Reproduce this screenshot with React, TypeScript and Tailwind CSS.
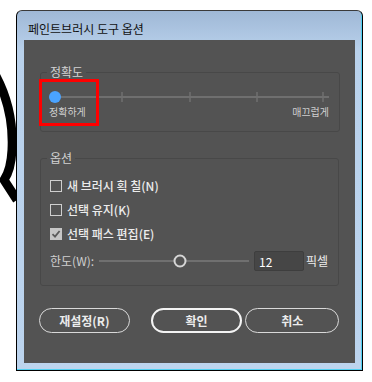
export default function App() {
  return (
    <div className="relative h-[382px] w-[372px] overflow-hidden bg-white pl-[16px] pt-[10px] font-['Noto_Sans_CJK_KR',sans-serif]">
      {/* stroke on the canvas behind the dialog */}
      <svg className="absolute left-0 top-0" width="20" height="220" viewBox="0 0 20 220">
        <path d="M-4 76 Q14 110 12 150 Q11 170 4 180 L17 200" fill="none" stroke="#000" strokeWidth="9" />
      </svg>

      <div className="relative h-[361px] w-[347px] rounded-t-[6px] border border-black border-t-[#3a3a3a] bg-[linear-gradient(#9fb8d6,#b9d1eb_40px,#bcd4ee)] shadow-[inset_-1px_-1px_0_#4fd0f2]">
        {/* Title */}
        <div className="h-[29px] pl-[11px] pt-[10px] text-[12px] leading-[16px] text-[#111]">페인트브러시 도구 옵션</div>

        {/* Body */}
        <div className="relative mx-[7px] h-[323px] bg-[#535353] px-[16px] pt-[24px]">
          <fieldset className="rounded-[3px] border border-[#484848] pb-[12px]">
            <legend className="ml-[6px] px-[3px] text-[12px] leading-[16px] text-[#d2d2d2]">정확도</legend>
            <div className="pl-[8px] pr-[10px] pt-[11px]">
              <svg width="280" height="12" viewBox="0 0 280 12" className="block">
                <line x1="6" y1="6" x2="280" y2="6" stroke="#6f6f6f" strokeWidth="2" />
                {[73, 141, 208, 274].map((x) => (
                  <line key={x} x1={x} y1="1" x2={x} y2="11" stroke="#6f6f6f" strokeWidth="1.5" />
                ))}
                <circle cx="6" cy="6" r="6" fill="#4aa3ff" />
              </svg>
              <div className="mt-[2px] flex justify-between text-[10px] leading-[14px] text-[#cfcfcf]">
                <span>정확하게</span>
                <span>매끄럽게</span>
              </div>
            </div>
          </fieldset>

          <fieldset className="mt-[18px] rounded-[3px] border border-[#484848] pb-[12px]">
            <legend className="ml-[6px] px-[3px] text-[12px] leading-[16px] text-[#d2d2d2]">옵션</legend>
            <div className="pt-[8px] text-[12px] font-medium text-[#ececec]">
              <div className="flex h-[24px] items-center gap-[5px] pl-[9px]">
                <span className="h-[12px] w-[12px] border border-[#cfcfcf]" />
                <span>새 브러시 획 칠(N)</span>
              </div>
              <div className="flex h-[24px] items-center gap-[5px] pl-[9px]">
                <span className="h-[12px] w-[12px] border border-[#cfcfcf]" />
                <span>선택 유지(K)</span>
              </div>
              <div className="flex h-[24px] items-center gap-[5px] pl-[9px]">
                <span className="flex h-[12px] w-[12px] items-center justify-center bg-[#c6c6c6]">
                  <svg width="10" height="10" viewBox="0 0 10 10">
                    <path d="M1.5 5.2 L4 7.6 L8.6 2" fill="none" stroke="#5b5b5b" strokeWidth="1.8" />
                  </svg>
                </span>
                <span>선택 패스 편집(E)</span>
              </div>
              <div className="mt-[3px] flex h-[24px] items-center pl-[9px] font-normal text-[#cfcfcf]">
                <span className="w-[49px]">한도(W):</span>
                <svg width="150" height="14" viewBox="0 0 150 14" className="block">
                  <line x1="0" y1="7" x2="150" y2="7" stroke="#7a7a7a" strokeWidth="1.5" />
                  <circle cx="81" cy="7" r="5.5" fill="#535353" stroke="#d6d6d6" strokeWidth="2" />
                </svg>
                <input
                  readOnly
                  value="12"
                  className="ml-[5px] h-[20px] w-[50px] rounded-[2px] border border-[#3e3e3e] bg-[#464646] pl-[4px] text-[12px] text-white outline-none"
                />
                <span className="ml-[2px] text-[#ececec]">픽셀</span>
              </div>
            </div>
          </fieldset>

          <div className="ml-[-1px] mt-[22px] flex text-[12px] font-bold text-[#ececec]">
            <button className="h-[25px] w-[91px] rounded-full border-[1.5px] border-[#d9d9d9]">재설정(R)</button>
            <button className="ml-[21px] h-[25px] w-[92px] rounded-full border-2 border-[#f4f4f4]">확인</button>
            <button className="ml-[3px] h-[25px] w-[94px] rounded-full border-[1.5px] border-[#d9d9d9]">취소</button>
          </div>

          {/* highlight marker */}
          <div className="absolute left-[15px] top-[39px] h-[47px] w-[60px] border-[3px] border-[#ff0000]" />
        </div>
      </div>
    </div>
  )
}
